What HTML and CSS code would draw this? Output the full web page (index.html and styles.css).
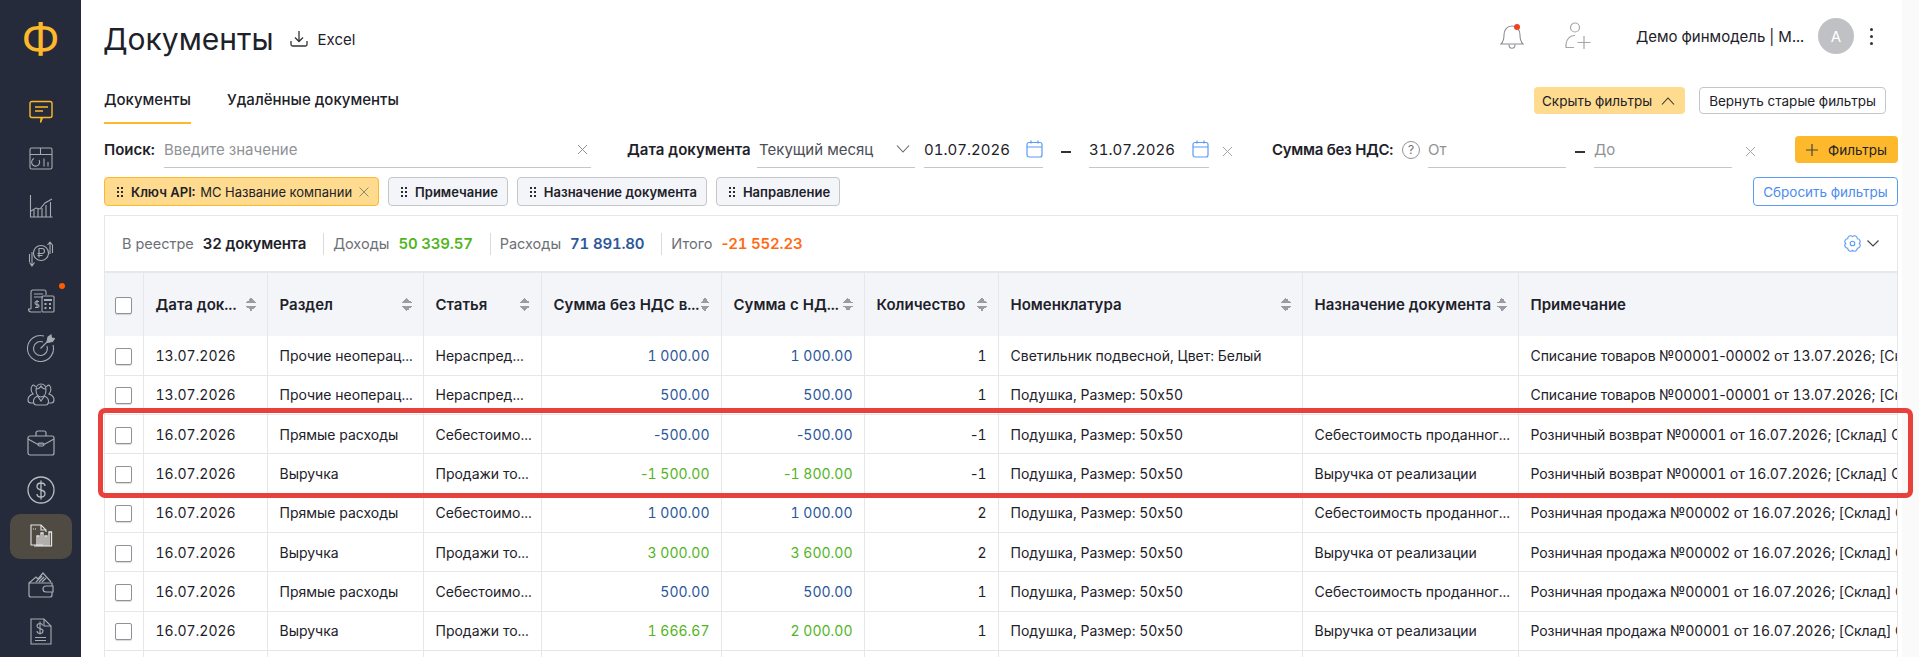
FILE: index.html
```html
<!DOCTYPE html>
<html lang="ru">
    <head>
        <meta charset="UTF-8">
        <title>Документы</title>
        <link rel="stylesheet" href="styles.css">
    </head>
    <body>
        <aside class="sidebar">
            <div class="logo">Ф</div>
            <nav class="side-nav">
                <a class="side-item side-chat">
                    <svg width="26" height="24" viewBox="0 0 26 24" fill="none" stroke="#fdb92b" stroke-width="1.4"><path d="M4 1.5h18a2 2 0 0 1 2 2v12a2 2 0 0 1-2 2h-7.5l-2 5 .8-5H4a2 2 0 0 1-2-2v-12a2 2 0 0 1 2-2z"/><path d="M7 7h13M7 11h8"/></svg>
                </a>
                <a class="side-item side-dash">
                    <svg width="24" height="24" viewBox="0 0 24 24" fill="none" stroke="#a8abb2" stroke-width="1.1"><rect x="1" y="1" width="22" height="21" rx="1.5"/><path d="M1 7.5h22M11.5 1v6.5"/><path d="M10 13a4 4 0 1 1-5-1.5"/><path d="M15 11.5v8M19 15v4.5"/></svg>
                </a>
                <a class="side-item side-chart">
                    <svg width="24" height="24" viewBox="0 0 24 24" fill="none" stroke="#a8abb2" stroke-width="1.1"><path d="M1.5 1v22h22"/><path d="M2 17l5-3 4 1 5-6 7-4"/><path d="M5 23v-7M9 23v-8M13 23v-9M17 23v-12M21.5 23v-15"/></svg>
                </a>
                <a class="side-item side-money">
                    <svg width="28" height="28" viewBox="0 0 28 28" fill="none" stroke="#a8abb2" stroke-width="1.1"><circle cx="14" cy="13" r="7.5"/><path d="M12 17.5v-9h3a2.5 2.5 0 0 1 0 5h-4.5M10.5 15.5h5"/><path d="M23 14V2.500M20.500 5l2.500-3 2.500 3M25.500 5v8M5 12v13M2.500 22.500L5 26l2.500-3.500M2.500 22v-8"/></svg>
                </a>
                <a class="side-item side-calc">
                    <svg width="28" height="24" viewBox="0 0 28 24" fill="none" stroke="#a8abb2" stroke-width="1.1"><path d="M4 20V3a2 2 0 0 1 2-2h11a2 2 0 0 1 2 2v3"/><path d="M4 20H1.5c0 2 1 3 2.5 3h10"/><path d="M7 5h9M7 8h9"/><rect x="15" y="7" width="12" height="16" rx="1"/><path d="M17 11h8" stroke-width="2"/><path d="M17.5 15h2M22 15h2M17.5 19h2M22 19h2" stroke-width="2"/><path d="M10 11v8M12 12.500H9.500a1.300 1.300 0 0 0 0 3h1a1.300 1.300 0 0 1 0 3H8"/></svg>
                    <span class="side-dot"></span>
                </a>
                <a class="side-item side-target">
                    <svg width="28" height="28" viewBox="0 0 28 28" fill="none" stroke="#a8abb2" stroke-width="1.1"><path d="M17 2a13 13 0 1 0 9 9"/><path d="M16 8a7 7 0 1 0 4 4"/><path d="M13.5 14.500L22 6"/><path d="M20 8l1-5 3-2 .5 3 3 .5-2 3-5 1z" fill="#a8abb2"/></svg>
                </a>
                <a class="side-item side-people">
                    <svg width="28" height="24" viewBox="0 0 28 24" fill="none" stroke="#a8abb2" stroke-width="1.1"><path d="M9 7c0-4 2-6 5-6s5 2 5 6-2 7-5 7-5-3-5-7z"/><path d="M9 6c2 0 4-1 5-3 1 2 3 3 5 3"/><path d="M8.500 4C8 2 6 1.500 5 3 3.500 5 4 9 6 11c-3 1-5 3-5 6 0 2 1 3 3 3h3"/><path d="M19.500 4c.5-2 2.500-2.500 3.500-1 1.500 2 1 6-1 8 3 1 5 3 5 6 0 2-1 3-3 3h-3"/><path d="M10.500 13c-2 1-4 2-4 5 0 2 1 4 3 4h9c2 0 3-2 3-4 0-3-2-4-4-5l-3.500 5z"/></svg>
                </a>
                <a class="side-item side-case">
                    <svg width="28" height="26" viewBox="0 0 28 26" fill="none" stroke="#a8abb2" stroke-width="1.2"><rect x="1" y="6" width="26" height="19" rx="2"/><path d="M9 6V3a2 2 0 0 1 2-2h6a2 2 0 0 1 2 2v3"/><path d="M1 9l9 5h8l9-5"/><rect x="11" y="13" width="6" height="3" rx="1.5"/></svg>
                </a>
                <a class="side-item side-dollar">
                    <svg width="28" height="28" viewBox="0 0 28 28" fill="none" stroke="#b9bcc2" stroke-width="1.3"><circle cx="14" cy="14" r="13"/><path d="M18 10c0-2-2-3-4-3s-4 1-4 3.500 2 3 4 3.500 4 1.200 4 3.500-2 3.500-4 3.500-4-1-4-3M14 4.500v19"/></svg>
                </a>
                <a class="side-item side-report">
                    <svg width="24" height="24" viewBox="0 0 24 24" fill="none" stroke="#e6e6e6" stroke-width="1.1"><path d="M14 21H2V1h10l5 5v2"/><path d="M12 1v5h5"/><path d="M4 5h4" stroke-dasharray="1 1"/><path d="M5 22h18"/><path d="M8 22V12h2v10M12 22V9h2v13M16 22V12h2v10M20 22V8h2.500v14" stroke-width="1.3"/></svg>
                </a>
                <a class="side-item side-wallet">
                    <svg width="26" height="26" viewBox="0 0 26 26" fill="none" stroke="#a8abb2" stroke-width="1.2"><path d="M1 11v12a2 2 0 0 0 2 2h19a2 2 0 0 0 2-2V11H1z"/><path d="M24 14h-6a2.500 2.500 0 0 0 0 6h7v-6z" fill="#252b3a"/><path d="M1 11L8 5l2 2 5-6 8 9"/><path d="M8 10l6-6M11 10l5-5M14 10l4-4"/></svg>
                </a>
                <a class="side-item side-receipt">
                    <svg width="22" height="27" viewBox="0 0 22 27" fill="none" stroke="#a8abb2" stroke-width="1.1"><path d="M1 1h13l7 7v18H1z"/><path d="M14 1v7h7"/><path d="M12.500 7.500c0-1.500-1.500-2-2.500-2s-3 .5-3 2.500 1.500 2 3 2.500 3 1 3 2.500-1.500 2.500-3 2.500-3-1-3-2.500M10 3.500v13"/><path d="M5 19.500h11M5 22.500h11"/></svg>
                </a>
            </nav>
        </aside>

        <main class="page">
            <header class="page-head">
                <h1>Документы</h1>
                <button class="excel-btn">
                    <svg width="18" height="18" viewBox="0 0 18 18" fill="none" stroke="#333" stroke-width="1.3"><path d="M9 1v10M5 7.500l4 4 4-4"/><path d="M1 11v3.500a1.500 1.500 0 0 0 1.500 1.500h13a1.500 1.500 0 0 0 1.500-1.500V11"/></svg>
                    Excel
                </button>
                <div class="head-right">
                    <span class="bell">
                        <svg width="26" height="27" viewBox="0 0 26 27" fill="none" stroke="#8a8d93" stroke-width="1.1"><path d="M2 21c2-2 3-4 3-9s3-9 8-9 8 4 8 9 1 7 3 9z"/><path d="M10 21.500c0 5 6 5 6 0"/></svg>
                        <span class="bell-dot"></span>
                    </span>
                    <svg class="user-add" width="28" height="28" viewBox="0 0 28 28" fill="none" stroke="#a3a6ab" stroke-width="1.2"><circle cx="11" cy="5.500" r="4.500"/><path d="M11 13.500c-5 0-8 3-9 8.500v3.500h8"/><path d="M20 14v13M13.500 20.500h13"/></svg>
                    <span class="company">Демо финмодель | М...</span>
                    <span class="avatar">А</span>
                    <span class="more"><i></i><i></i><i></i></span>
                </div>
            </header>

            <div class="tabs-row">
                <div class="tabs">
                    <a class="tab active">Документы</a>
                    <a class="tab">Удалённые документы</a>
                </div>
                <div class="tabs-actions">
                    <button class="btn btn-soft">Скрыть фильтры
                        <svg width="14" height="8" viewBox="0 0 14 8" fill="none" stroke="#333" stroke-width="1.1"><path d="M1 7.500l6-6.500 6 6.500"/></svg>
                    </button>
                    <button class="btn btn-line">Вернуть старые фильтры</button>
                </div>
            </div>

            <div class="filters">
                <label class="f-label f-search-label">Поиск:</label>
                <div class="field f-search">
                    <span class="placeholder">Введите значение</span>
                    <svg class="x" width="11" height="11" viewBox="0 0 11 11" stroke="#8f9297"><path d="M1 1l9 9M10 1l-9 9"/></svg>
                </div>
                <label class="f-label f-date-label">Дата документа</label>
                <div class="field f-select">
                    <span class="value-dim">Текущий месяц</span>
                    <svg width="14" height="8" viewBox="0 0 14 8" fill="none" stroke="#666" stroke-width="1.1"><path d="M1 .5l6 6.500 6-6.500"/></svg>
                </div>
                <div class="field f-date f-date-from">
                    <span class="value">01.07.2026</span>
                    <svg width="17" height="18" viewBox="0 0 17 18" fill="none" stroke="#5b9bf5" stroke-width="1.2"><rect x="1" y="2.500" width="15" height="14.500" rx="2"/><path d="M1 7h15M5 .5v3M12 .5v3"/></svg>
                </div>
                <span class="dash dash-date"></span>
                <div class="field f-date">
                    <span class="value">31.07.2026</span>
                    <svg width="17" height="18" viewBox="0 0 17 18" fill="none" stroke="#5b9bf5" stroke-width="1.2"><rect x="1" y="2.500" width="15" height="14.500" rx="2"/><path d="M1 7h15M5 .5v3M12 .5v3"/></svg>
                </div>
                <svg class="x x-date" width="11" height="11" viewBox="0 0 11 11" stroke="#a3a6ab"><path d="M1 1l9 9M10 1l-9 9"/></svg>
                <label class="f-label f-sum-label">Сумма без НДС:</label>
                <span class="help">?</span>
                <div class="field f-sum"><span class="placeholder">От</span></div>
                <span class="dash dash-sum"></span>
                <div class="field f-sum"><span class="placeholder">До</span></div>
                <svg class="x x-date" width="11" height="11" viewBox="0 0 11 11" stroke="#a3a6ab"><path d="M1 1l9 9M10 1l-9 9"/></svg>
                <button class="btn btn-add">
                    <svg width="12" height="12" viewBox="0 0 12 12" stroke="#444" stroke-width="1.2"><path d="M6 0v12M0 6h12"/></svg>
                    Фильтры
                </button>
            </div>

            <div class="chips">
                <span class="chip chip-on"><i class="grip"></i><b>Ключ API:</b> МС Название компании
                    <svg width="10" height="10" viewBox="0 0 10 10" stroke="#8c8674"><path d="M.5.5l9 9M9.500.5l-9 9"/></svg>
                </span>
                <span class="chip"><i class="grip"></i><b>Примечание</b></span>
                <span class="chip"><i class="grip"></i><b>Назначение документа</b></span>
                <span class="chip"><i class="grip"></i><b>Направление</b></span>
                <button class="btn btn-reset">Сбросить фильтры</button>
            </div>

            <section class="registry">
                <div class="summary">
                    <span class="s-group"><span class="s-label">В реестре</span> <b>32 документа</b></span>
                    <span class="s-group"><span class="s-label">Доходы</span> <b class="green">50 339.57</b></span>
                    <span class="s-group"><span class="s-label">Расходы</span> <b class="blue">71 891.80</b></span>
                    <span class="s-group"><span class="s-label">Итого</span> <b class="orange"><span class="minus">-</span>21 552.23</b></span>
                    <span class="s-config">
                        <svg width="17" height="17" viewBox="0 0 17 17" fill="none" stroke="#5b9bf5" stroke-width="1.1"><path d="M15.3 8.5A2.8 2.8 0 0 1 13.31 13.31A2.8 2.8 0 0 1 8.5 15.3A2.8 2.8 0 0 1 3.69 13.31A2.8 2.8 0 0 1 1.7 8.5A2.8 2.8 0 0 1 3.69 3.69A2.8 2.8 0 0 1 8.5 1.7A2.8 2.8 0 0 1 13.31 3.69A2.8 2.8 0 0 1 15.3 8.5z"/><circle cx="8.5" cy="8.5" r="2.3"/></svg>
                        <svg width="12" height="7" viewBox="0 0 12 7" fill="none" stroke="#444" stroke-width="1.2"><path d="M.5.5L6 6l5.5-5.500"/></svg>
                    </span>
                </div>
                <table class="docs">
                    <colgroup>
                        <col class="c-check"><col class="c-date"><col class="c-section"><col class="c-item">
                        <col class="c-sum"><col class="c-sum2"><col class="c-qty"><col class="c-nom">
                        <col class="c-purpose"><col class="c-note">
                    </colgroup>
                    <thead>
                        <tr>
                            <th><span class="check"></span></th>
                            <th><div class="th-in">Дата док...<i class="sort"></i></div></th>
                            <th><div class="th-in">Раздел<i class="sort"></i></div></th>
                            <th><div class="th-in">Статья<i class="sort"></i></div></th>
                            <th><div class="th-in">Сумма без НДС в...<i class="sort"></i></div></th>
                            <th><div class="th-in">Сумма с НД...<i class="sort"></i></div></th>
                            <th><div class="th-in">Количество<i class="sort"></i></div></th>
                            <th><div class="th-in">Номенклатура<i class="sort"></i></div></th>
                            <th><div class="th-in">Назначение документа<i class="sort"></i></div></th>
                            <th><div class="th-in">Примечание</div></th>
                        </tr>
                    </thead>
                    <tbody>
                        <tr>
                            <td><span class="check"></span></td><td>13.07.2026</td><td>Прочие неоперац...</td><td>Нераспред...</td>
                            <td class="num blue-t">1 000.00</td><td class="num blue-t">1 000.00</td><td class="num">1</td>
                            <td>Светильник подвесной, Цвет: Белый</td><td></td>
                            <td class="note">Списание товаров №00001<span class="minus">-</span>00002 от 13.07.2026; [Склад] Основной склад</td>
                        </tr>
                        <tr>
                            <td><span class="check"></span></td><td>13.07.2026</td><td>Прочие неоперац...</td><td>Нераспред...</td>
                            <td class="num blue-t">500.00</td><td class="num blue-t">500.00</td><td class="num">1</td>
                            <td>Подушка, Размер: 50х50</td><td></td>
                            <td class="note">Списание товаров №00001<span class="minus">-</span>00001 от 13.07.2026; [Склад] Основной склад</td>
                        </tr>
                        <tr>
                            <td><span class="check"></span></td><td>16.07.2026</td><td>Прямые расходы</td><td>Себестоимо...</td>
                            <td class="num blue-t"><span class="minus">-</span>500.00</td><td class="num blue-t"><span class="minus">-</span>500.00</td><td class="num"><span class="minus">-</span>1</td>
                            <td>Подушка, Размер: 50х50</td><td>Себестоимость проданног...</td>
                            <td class="note">Розничный возврат №00001 от 16.07.2026; [Склад] Основной склад</td>
                        </tr>
                        <tr>
                            <td><span class="check"></span></td><td>16.07.2026</td><td>Выручка</td><td>Продажи то...</td>
                            <td class="num green-t"><span class="minus">-</span>1 500.00</td><td class="num green-t"><span class="minus">-</span>1 800.00</td><td class="num"><span class="minus">-</span>1</td>
                            <td>Подушка, Размер: 50х50</td><td>Выручка от реализации</td>
                            <td class="note">Розничный возврат №00001 от 16.07.2026; [Склад] Основной склад</td>
                        </tr>
                        <tr>
                            <td><span class="check"></span></td><td>16.07.2026</td><td>Прямые расходы</td><td>Себестоимо...</td>
                            <td class="num blue-t">1 000.00</td><td class="num blue-t">1 000.00</td><td class="num">2</td>
                            <td>Подушка, Размер: 50х50</td><td>Себестоимость проданног...</td>
                            <td class="note">Розничная продажа №00002 от 16.07.2026; [Склад] Основной склад</td>
                        </tr>
                        <tr>
                            <td><span class="check"></span></td><td>16.07.2026</td><td>Выручка</td><td>Продажи то...</td>
                            <td class="num green-t">3 000.00</td><td class="num green-t">3 600.00</td><td class="num">2</td>
                            <td>Подушка, Размер: 50х50</td><td>Выручка от реализации</td>
                            <td class="note">Розничная продажа №00002 от 16.07.2026; [Склад] Основной склад</td>
                        </tr>
                        <tr>
                            <td><span class="check"></span></td><td>16.07.2026</td><td>Прямые расходы</td><td>Себестоимо...</td>
                            <td class="num blue-t">500.00</td><td class="num blue-t">500.00</td><td class="num">1</td>
                            <td>Подушка, Размер: 50х50</td><td>Себестоимость проданног...</td>
                            <td class="note">Розничная продажа №00001 от 16.07.2026; [Склад] Основной склад</td>
                        </tr>
                        <tr>
                            <td><span class="check"></span></td><td>16.07.2026</td><td>Выручка</td><td>Продажи то...</td>
                            <td class="num green-t">1 666.67</td><td class="num green-t">2 000.00</td><td class="num">1</td>
                            <td>Подушка, Размер: 50х50</td><td>Выручка от реализации</td>
                            <td class="note">Розничная продажа №00001 от 16.07.2026; [Склад] Основной склад</td>
                        </tr>
                        <tr class="row-tail">
                            <td></td><td></td><td></td><td></td><td></td><td></td><td></td><td></td><td></td><td></td>
                        </tr>
                    </tbody>
                </table>
                <div class="highlight"></div>
            </section>
        </main>
    </body>
</html>
```

FILE: styles.css
```css
* {
    box-sizing: border-box;
}

html, body {
    height: 100%;
}

body {
    margin: 0;
    display: flex;
    overflow: hidden;
    font-family: Inter, "Noto Sans", sans-serif;
    font-size: 14px;
    font-variant-numeric: tabular-nums;
    color: #1d2129;
    background: #fafafa;
}

button {
    font: inherit;
    color: inherit;
}

/* sidebar */

.sidebar {
    flex: 0 0 81px;
    height: 100%;
    background-color: #252b3a;
    display: flex;
    flex-direction: column;
    align-items: center;
}

.logo {
    height: 88px;
    padding-top: 9px;
    font-family: "Noto Sans", sans-serif;
    font-size: 46px;
    line-height: 56px;
    color: #fdb92b;
}

.side-nav {
    display: flex;
    flex-direction: column;
    align-items: center;
}

.side-item {
    position: relative;
    width: 62px;
    height: 47.3px;
    display: flex;
    align-items: center;
    justify-content: center;
}

.side-report {
    background-color: #4f4a42;
    border-radius: 10px;
    height: 45px;
    margin: 0 0 2.3px;
}

.side-dot {
    position: absolute;
    top: 6px;
    right: 7px;
    width: 6px;
    height: 6px;
    border-radius: 50%;
    background-color: #ff5c00;
}

/* main */

.page {
    flex: 0 0 1821px;
    padding: 0 4px 0 23px;
    background: white;
}

.page-head {
    height: 78px;
    display: flex;
    align-items: center;
}

h1 {
    margin: 0 0 0 -1px;
    font-size: 30px;
    font-weight: 400;
    color: #1d2129;
}

.excel-btn {
    display: flex;
    align-items: center;
    gap: 10px;
    margin-left: 16px;
    padding: 0;
    border: none;
    background: none;
    font-size: 15px;
}

.head-right {
    margin-left: auto;
    display: flex;
    align-items: center;
    margin-top: -6px;
}

.bell {
    position: relative;
    display: flex;
}

.bell-dot {
    position: absolute;
    top: 1px;
    right: 5px;
    width: 6px;
    height: 6px;
    border-radius: 50%;
    background-color: #f0401c;
}

.user-add {
    margin-left: 39px;
}

.company {
    margin-left: 44px;
    font-size: 15px;
    white-space: nowrap;
}

.avatar {
    width: 36px;
    height: 36px;
    margin-left: 14px;
    border-radius: 50%;
    background-color: #bfc1c5;
    color: white;
    font-size: 15px;
    display: flex;
    align-items: center;
    justify-content: center;
}

.more {
    display: flex;
    flex-direction: column;
    gap: 4px;
    margin-left: 16px;
    margin-right: 25px;
}

.more i {
    width: 3px;
    height: 3px;
    border-radius: 50%;
    background-color: #333;
}

.tabs-row {
    display: flex;
    justify-content: space-between;
    align-items: flex-start;
    height: 46px;
}

.tabs {
    display: flex;
    gap: 36px;
}

.tab {
    height: 46px;
    padding-top: 12px;
    font-size: 15px;
    font-weight: 500;
}

.tab.active {
    border-bottom: 2px solid #fdb92b;
}

.tabs-actions {
    display: flex;
    gap: 14px;
    padding: 9px 12px 0 0;
}

.btn {
    height: 27px;
    padding: 0 8px;
    border-radius: 4px;
    font-size: 13.5px;
    display: flex;
    align-items: center;
    white-space: nowrap;
}

.btn-soft {
    width: 151px;
    border: none;
    background-color: #fedb8e;
    gap: 9px;
}

.btn-line {
    width: 187px;
    justify-content: center;
    border: 1px solid #c4c6ca;
    background: white;
}

/* filters */

.filters {
    margin-top: 12px;
    height: 41px;
    display: flex;
    align-items: flex-start;
}

.f-label {
    flex: none;
    font-size: 15px;
    font-weight: 600;
    line-height: 28px;
    white-space: nowrap;
}

.field {
    flex: none;
    height: 32px;
    padding-bottom: 5px;
    border-bottom: 1px solid #c4c6ca;
    display: flex;
    align-items: center;
    justify-content: space-between;
    font-size: 15px;
}

.placeholder {
    color: #8f9297;
}

.value-dim {
    color: #4b4e55;
    padding-left: 2px;
}

.f-search-label {
    width: 50px;
}

.f-search {
    width: 427px;
    margin-left: 10px;
    padding-right: 3px;
}

.f-date-label {
    margin-left: 36px;
    width: 130px;
}

.f-select {
    width: 158px;
    padding-right: 5px;
}

.f-date {
    width: 120px;
}

.f-date-from {
    width: 119px;
    margin-left: 9px;
}

.dash {
    flex: 0 0 10px;
    height: 2px;
    background-color: #333;
    margin-top: 15px;
}

.dash-date {
    margin-left: 18px;
    margin-right: 18px;
}

.dash-sum {
    margin-left: 9px;
    margin-right: 9px;
}

.x {
    flex: none;
}

.x-date {
    margin: 10px 0 0 13px;
}

.f-sum-label {
    margin-left: 39px;
    width: 120px;
    letter-spacing: -0.3px;
}

.help {
    flex: none;
    width: 18px;
    height: 18px;
    margin: 5px 8px 0 10px;
    border: 1px solid #8f9297;
    border-radius: 50%;
    color: #6d7076;
    font-size: 12px;
    line-height: 16px;
    text-align: center;
}

.f-sum {
    width: 138px;
}

.btn-add {
    margin-left: auto;
    width: 103px;
    gap: 10px;
    padding-left: 11px;
    border: none;
    background-color: #fdb92b;
}

.chips {
    display: flex;
    gap: 9px;
    height: 29px;
}

.chip {
    height: 29px;
    padding: 0 9px 0 11px;
    display: flex;
    align-items: center;
    gap: 5px;
    background-color: #f4f5f9;
    border: 1px solid #c4c6ca;
    border-radius: 4px;
    font-size: 13px;
    white-space: nowrap;
}

.chip b {
    font-weight: 600;
}

.chip-on {
    background-color: #fedb8e;
    border-color: #fdb92b;
}

.chip-on svg {
    margin-left: 2px;
}

.grip {
    flex: none;
    width: 8px;
    height: 12px;
    margin-right: 2px;
    background-image: radial-gradient(circle, #2a2d33 1.4px, transparent 1.5px);
    background-size: 4px 4px;
}

.btn-reset {
    margin-left: auto;
    height: 29px;
    width: 145px;
    justify-content: center;
    background: white;
    border: 1px solid #5b9bf5;
    color: #4c8cf0;
}

/* registry */

.registry {
    position: relative;
    margin-top: 9px;
    border-top: 1px solid #e6e7ea;
    border-left: 1px solid #e6e7ea;
}

.summary {
    height: 57px;
    padding-left: 17px;
    display: flex;
    align-items: center;
    font-size: 15px;
    border-right: 1px solid #e6e7ea;
    border-bottom: 2px solid #e6e7ea;
}

.s-group {
    display: flex;
    gap: 9px;
    padding: 0 17px 0 9px;
    border-left: 1px solid #d9dadd;
    line-height: 22px;
}

.s-group:first-child {
    border-left: none;
    padding-left: 0;
}

.s-group b {
    font-weight: 600;
    letter-spacing: -0.2px;
}

.s-label {
    color: #6d7076;
    font-size: 14.5px;
}

.green {
    color: #52b51e;
}

.blue {
    color: #2b579c;
}

.orange {
    color: #ff6a13;
}

/* Inter widens the hyphen under tabular-nums */
.minus {
    font-variant-numeric: normal;
}

.s-config {
    margin-left: auto;
    margin-right: 18px;
    display: flex;
    align-items: center;
    gap: 6px;
}

.docs {
    width: 1792px;
    table-layout: fixed;
    border-collapse: collapse;
}

.c-check { width: 38px; }
.c-date { width: 124px; }
.c-section { width: 156px; }
.c-item { width: 118px; }
.c-sum { width: 180px; }
.c-sum2 { width: 143px; }
.c-qty { width: 134px; }
.c-nom { width: 304px; }
.c-purpose { width: 216px; }
.c-note { width: 379px; }

th {
    height: 63px;
    padding: 0 11px 0 12px;
    background-color: #f4f5f9;
    border-right: 1px solid #e6e7ea;
    text-align: left;
    font-size: 15px;
    font-weight: 600;
}

th:first-child, td:first-child {
    padding: 0;
    text-align: center;
}

.th-in {
    display: flex;
    align-items: center;
    justify-content: space-between;
    white-space: nowrap;
}

.sort {
    flex: none;
    width: 10px;
    height: 13px;
    background-image: linear-gradient(to bottom right, transparent 50%, #9a9ca1 50%), linear-gradient(to bottom left, transparent 50%, #9a9ca1 50%), linear-gradient(to top right, transparent 50%, #9a9ca1 50%), linear-gradient(to top left, transparent 50%, #9a9ca1 50%);
    background-size: 5px 5px;
    background-repeat: no-repeat;
    background-position: 0 0, 5px 0, 0 8px, 5px 8px;
}

td {
    height: 39.33px;
    padding: 0 11px 0 12px;
    border-right: 1px solid #e6e7ea;
    border-bottom: 1px solid #e6e7ea;
    white-space: nowrap;
    overflow: hidden;
}

.row-tail td {
    height: 6px;
    border-bottom: none;
}

.note {
    letter-spacing: -0.1px;
}

.num {
    text-align: right;
}

.blue-t {
    color: #2b579c;
}

.green-t {
    color: #52b51e;
}

.check {
    display: inline-block;
    vertical-align: middle;
    width: 17px;
    height: 17px;
    background: white;
    border: 1px solid #8f9297;
    border-radius: 2px;
    box-shadow: 0 1px 1px rgba(0, 0, 0, 0.15);
}

.highlight {
    position: absolute;
    top: 192px;
    left: -7px;
    right: -15px;
    height: 90px;
    border: 5px solid #e8403a;
    border-radius: 7px;
    pointer-events: none;
}
```
